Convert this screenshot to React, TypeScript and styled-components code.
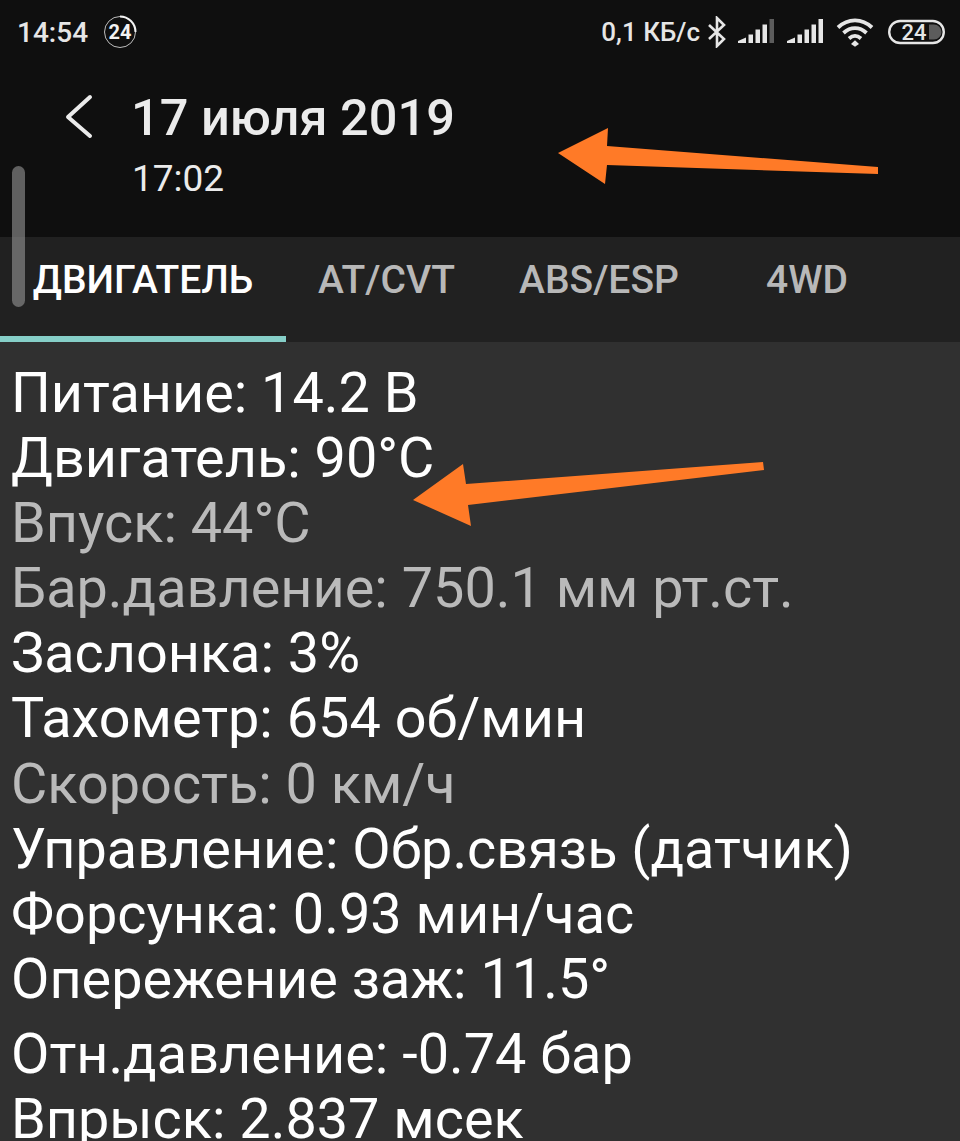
import styled, { createGlobalStyle } from "styled-components";

const GlobalStyle = createGlobalStyle`
  html, body {
    margin: 0;
    padding: 0;
    background: #303030;
  }
  * {
    box-sizing: border-box;
  }
`;

const Screen = styled.div`
  position: relative;
  width: 960px;
  height: 1141px;
  overflow: hidden;
  background: #303030;
  font-family: Roboto, "Noto Sans", sans-serif;
  color: #fff;
`;

const TopArea = styled.header`
  height: 237px;
  background: #0f0f0f;
`;

const StatusBar = styled.div`
  height: 64px;
  padding: 0 15px 0 17px;
  display: flex;
  align-items: center;
  justify-content: space-between;
  color: #e6e6e6;
`;

const StatusGroup = styled.div`
  display: flex;
  align-items: center;
`;

const StatusText = styled.span<{ $size: number }>`
  font-size: ${(p) => p.$size}px;
  font-weight: 500;
`;

const TitleRow = styled.div`
  display: flex;
  padding: 26px 0 0 64px;
  gap: 37px;
`;

const BackIcon = styled.svg`
  width: 30px;
  height: 46px;
  margin-top: 3px;
  flex: none;
`;

const TitleBlock = styled.div`
  display: flex;
  flex-direction: column;
`;

const Title = styled.div`
  font-size: 50.5px;
  line-height: 56px;
  font-weight: 500;
  color: #ebebeb;
`;

const Subtitle = styled.div`
  font-size: 37px;
  line-height: 40px;
  margin: 13px 0 0 1px;
  color: #ebebeb;
`;

const Tabs = styled.nav`
  height: 105px;
  background: #212121;
  display: flex;
  position: relative;
`;

const Tab = styled.div<{ $width: number; $active?: boolean }>`
  width: ${(p) => p.$width}px;
  flex: none;
  display: flex;
  align-items: center;
  justify-content: center;
  padding-bottom: 13px;
  font-size: 39px;
  font-weight: 500;
  color: ${(p) => (p.$active ? "#fff" : "#b8b8b8")};
  border-bottom: 6px solid ${(p) => (p.$active ? "#86cfc8" : "transparent")};
`;

const Readings = styled.main`
  padding: 19px 0 0 11px;
`;

const Reading = styled.div<{ $dim?: boolean; $gap?: number }>`
  font-size: 55.8px;
  line-height: 65.1px;
  white-space: nowrap;
  margin-top: ${(p) => p.$gap ?? 0}px;
  color: ${(p) => (p.$dim ? "#bababa" : "#fff")};
`;

const ScrollThumb = styled.div`
  position: absolute;
  left: 12px;
  top: 166px;
  width: 13px;
  height: 141px;
  border-radius: 7px;
  background: rgba(150, 150, 150, 0.6);
`;

const ArrowOverlay = styled.svg`
  position: absolute;
  left: 0;
  top: 0;
  width: 960px;
  height: 1141px;
  pointer-events: none;
`;

const TimerBadge = () => (
  <svg width="36" height="36" viewBox="0 0 36 36" style={{ marginLeft: 14 }}>
    <circle cx="18" cy="18" r="15.5" fill="none" stroke="#bdbdbd" strokeWidth="1" />
    <path d="M18 2.5A15.5 15.5 0 0 1 33.5 18" fill="none" stroke="#f2f2f2" strokeWidth="2" />
    <text x="18" y="25" textAnchor="middle" fontFamily="Roboto, sans-serif" fontSize="20" fontWeight="700" fill="#f2f2f2">
      24
    </text>
  </svg>
);

const BluetoothIcon = () => (
  <svg width="20" height="32" viewBox="0 0 20 32" style={{ marginLeft: 7 }}>
    <path d="M2 9l15 14-7 7V2l7 7L2 23" fill="none" stroke="#e6e6e6" strokeWidth="2.6" />
  </svg>
);

const SignalIcon = ({ faded, left }: { faded?: boolean; left: number }) => (
  <svg width="36" height="25" viewBox="0 0 36 25" style={{ marginLeft: left, marginTop: -1 }}>
    <path d="M0 22L8 18.5V24H0z" fill="#e6e6e6" />
    <rect x="10.5" y="15.5" width="4.5" height="8.5" fill="#e6e6e6" />
    <rect x="17.5" y="10.5" width="4.5" height="13.5" fill="#e6e6e6" />
    <rect x="24.5" y="5.5" width="4.5" height="18.5" fill="#e6e6e6" />
    <rect x="31.5" y="0" width="4.5" height="24" fill={faded ? "#5c5c5c" : "#e6e6e6"} />
  </svg>
);

const WifiIcon = () => (
  <svg width="38" height="30" viewBox="0 0 38 30" style={{ marginLeft: 13, marginRight: -1 }}>
    <g fill="none" stroke="#e6e6e6" strokeWidth="3.8">
      <path d="M2 10.5c10-9.5 24-9.5 34 0" />
      <path d="M7.5 16c7-6.5 16-6.5 23 0" />
      <path d="M13 21.5c4-3.5 8-3.5 12 0" />
    </g>
    <path d="M19 23.2l4 3.8-4 2.8-4-2.8z" fill="#e6e6e6" />
  </svg>
);

const BatteryIcon = () => (
  <svg width="57" height="26" viewBox="0 0 57 26" style={{ marginLeft: 15 }}>
    <rect x="1.2" y="2" width="54.6" height="22" rx="11" fill="none" stroke="#e6e6e6" strokeWidth="2.4" />
    <path d="M41 5.5h5a7.5 7.5 0 0 1 0 15h-5z" fill="#5c5c5c" />
    <text x="26" y="21" textAnchor="middle" fontFamily="Roboto, sans-serif" fontSize="22" fontWeight="500" fill="#e6e6e6">
      24
    </text>
  </svg>
);

const tabs = [
  { label: "ДВИГАТЕЛЬ", width: 286, active: true },
  { label: "AT/CVT", width: 201 },
  { label: "ABS/ESP", width: 224 },
  { label: "4WD", width: 192 },
];

const readings = [
  { text: "Питание: 14.2 В" },
  { text: "Двигатель: 90°C" },
  { text: "Впуск: 44°C", dim: true },
  { text: "Бар.давление: 750.1 мм рт.ст.", dim: true },
  { text: "Заслонка: 3%" },
  { text: "Тахометр: 654 об/мин" },
  { text: "Скорость: 0 км/ч", dim: true },
  { text: "Управление: Обр.связь (датчик)" },
  { text: "Форсунка: 0.93 мин/час" },
  { text: "Опережение заж: 11.5°" },
  { text: "Отн.давление: -0.74 бар", gap: 10 },
  { text: "Впрыск: 2.837 мсек" },
];

export default function App() {
  return (
    <Screen>
      <GlobalStyle />
      <TopArea>
        <StatusBar>
          <StatusGroup>
            <StatusText $size={28}>14:54</StatusText>
            <TimerBadge />
          </StatusGroup>
          <StatusGroup>
            <StatusText $size={26}>0,1 КБ/с</StatusText>
            <BluetoothIcon />
            <SignalIcon faded left={11} />
            <SignalIcon left={13} />
            <WifiIcon />
            <BatteryIcon />
          </StatusGroup>
        </StatusBar>
        <TitleRow>
          <BackIcon viewBox="0 0 30 46">
            <path d="M26 4L4 24l22 19" fill="none" stroke="#ebebeb" strokeWidth="4" strokeLinecap="round" strokeLinejoin="round" />
          </BackIcon>
          <TitleBlock>
            <Title>17 июля 2019</Title>
            <Subtitle>17:02</Subtitle>
          </TitleBlock>
        </TitleRow>
      </TopArea>
      <Tabs>
        {tabs.map((t) => (
          <Tab key={t.label} $width={t.width} $active={t.active}>
            {t.label}
          </Tab>
        ))}
      </Tabs>
      <Readings>
        {readings.map((r) => (
          <Reading key={r.text} $dim={r.dim} $gap={r.gap}>
            {r.text}
          </Reading>
        ))}
      </Readings>
      <ScrollThumb />
      <ArrowOverlay viewBox="0 0 960 1141">
        <polygon points="558,153 608,128 607,146 878,167 878,174 607,165 605,184" fill="#ff7a27" />
        <polygon points="413,500 463,464 466,484 763,462 764,470 468,505 471,526" fill="#ff7a27" />
      </ArrowOverlay>
    </Screen>
  );
}
